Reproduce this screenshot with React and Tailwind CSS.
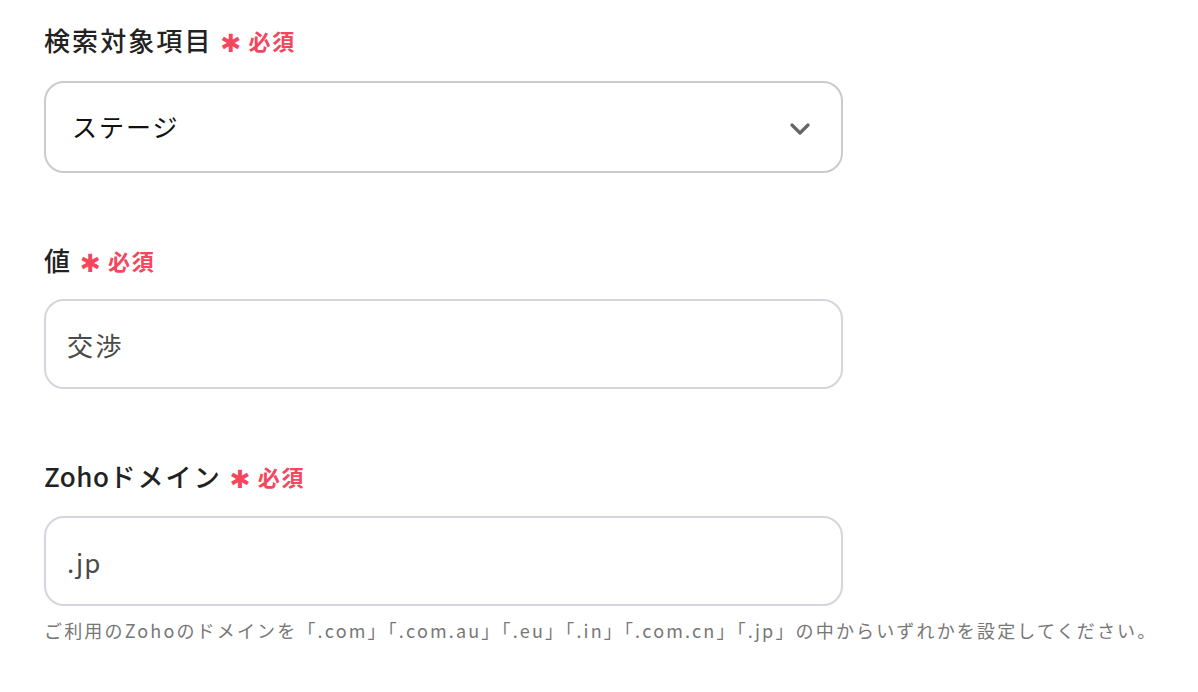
import React from "react";

const font = { fontFamily: '"Noto Sans CJK JP", "Noto Sans", sans-serif' };

function Label({ children }) {
  return (
    <div className="flex items-center h-[36px] leading-[36px] text-[#222]">
      <span className="font-medium text-[26px] tracking-[0.08em]">{children}</span>
      <span
        className="ml-[8px] text-[#f4475e] text-[25px] leading-none mt-[7px]"
        style={{ fontFamily: '"DejaVu Sans", sans-serif' }}
      >
        ✱
      </span>
      <span className="ml-[7px] text-[#f4475e] text-[22px] font-bold tracking-[0.08em]">必須</span>
    </div>
  );
}

export default function App() {
  return (
    <div className="w-[1198px] h-[692px] bg-white pl-[44px] pt-[22px]" style={font}>
      <Label>検索対象項目</Label>
      <div className="mt-[23px] w-[799px] h-[92px] border-2 border-[#cbcbcb] rounded-[20px] flex items-center pl-[26px] pr-[30px] justify-between">
        <span className="text-[25px] text-[#111] tracking-[0.08em]">ステージ</span>
        <svg width="22" height="14" viewBox="0 0 22 14" className="mt-[4px]">
          <path d="M3 3 L11 11 L19 3" fill="none" stroke="#666" strokeWidth="3.2" strokeLinecap="round" strokeLinejoin="round" />
        </svg>
      </div>

      <div className="mt-[69px]">
        <Label>値</Label>
      </div>
      <div className="mt-[21px] w-[799px] h-[90px] border-2 border-[#d3d6dd] rounded-[20px] flex items-center pl-[21px]">
        <span className="text-[26px] text-[#4a4a4a] tracking-[0.1em]">交渉</span>
      </div>

      <div className="mt-[69px]">
        <Label>
          <span className="tracking-[0.02em]">Zoho</span>ドメイン
        </Label>
      </div>
      <div className="mt-[22px] w-[799px] h-[90px] border-2 border-[#d3d6dd] rounded-[20px] flex items-center pl-[21px]">
        <span className="text-[26px] text-[#4a4a4a] tracking-[0.04em]">.jp</span>
      </div>
      <div className="mt-[12px] text-[18px] leading-[24px] text-[#777] tracking-[0.12em] whitespace-nowrap">
        ご利用のZohoのドメインを「.com」「.com.au」「.eu」「.in」「.com.cn」「.jp」の中からいずれかを設定してください。
      </div>
    </div>
  );
}
